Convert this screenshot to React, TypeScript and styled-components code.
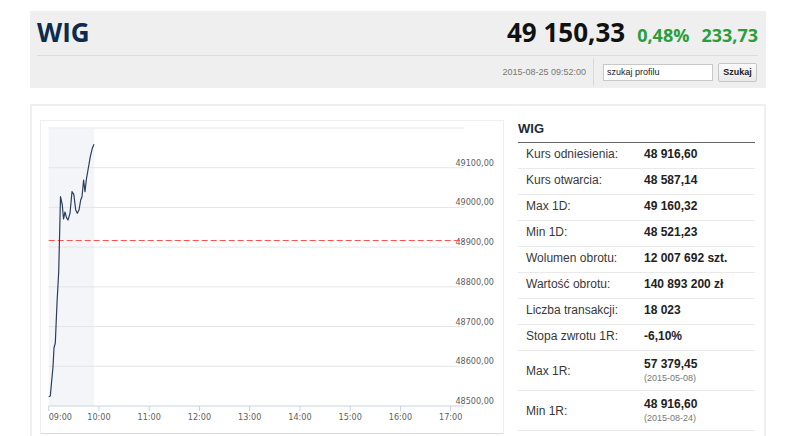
import React from "react";
import styled, { createGlobalStyle } from "styled-components";

const GlobalStyle = createGlobalStyle`
  *, *::before, *::after { box-sizing: border-box; }
  html, body { margin: 0; padding: 0; background: #ffffff; }
  body { font-family: "Liberation Sans", Arial, sans-serif; color: #333; }
`;

const Page = styled.div`
  width: 786px;
  padding: 11px 20px 0 30px;
`;

/* ---------- quote header ---------- */

const Header = styled.header`
  background: #efefef;
  height: 77px;
  padding: 0 8px 0 7px;
  display: flex;
  flex-direction: column;
`;

const TopRow = styled.div`
  height: 45px;
  padding-top: 6px;
  border-bottom: 1px solid #dcdcdc;
  display: flex;
  align-items: baseline;
  justify-content: space-between;
  font-family: "Open Sans", sans-serif;
  line-height: 30px;
`;

const Title = styled.h1`
  margin: 0;
  font-size: 26px;
  font-weight: 700;
  color: #0c2b4e;
  line-height: 30px;
`;

const Quote = styled.div`
  display: flex;
  align-items: baseline;
  gap: 12px;
`;

const Price = styled.span`
  font-size: 26px;
  font-weight: 700;
  color: #111;
`;

const Change = styled.span`
  font-size: 18px;
  font-weight: 700;
  color: #2a9d3c;
`;

const BottomRow = styled.div`
  flex: 1;
  display: flex;
  align-items: center;
  justify-content: flex-end;
  padding-right: 1px;
`;

const Stamp = styled.span`
  font-size: 9px;
  color: #777;
  margin-right: 7px;
`;

const Divider = styled.span`
  width: 1px;
  height: 28px;
  background: #dadada;
  margin-right: 9px;
`;

const SearchInput = styled.input`
  width: 110px;
  height: 17px;
  border: 1px solid #c8c8c8;
  background: #fff;
  padding: 0 3px;
  font-family: "Liberation Sans", Arial, sans-serif;
  font-size: 9px;
  color: #222;
  outline: none;
`;

const SearchButton = styled.button`
  margin-left: 5px;
  width: 39px;
  height: 19px;
  padding: 0;
  border: 1px solid #c6c6c6;
  border-radius: 2px;
  background: linear-gradient(#fbfbfb, #e9e9e9);
  font-family: "Liberation Sans", Arial, sans-serif;
  font-size: 9px;
  font-weight: 700;
  color: #222;
`;

/* ---------- body panel ---------- */

const Panel = styled.section`
  margin-top: 16px;
  border: 2px solid #efefef;
  border-bottom: none;
  padding: 14px 9px 0 8px;
  height: 332px;
  display: flex;
  align-items: flex-start;
  gap: 14px;
`;

const ChartBox = styled.div`
  width: 464px;
  height: 314px;
  border: 1px solid #efefef;
  border-bottom-color: #d9d9d9;
  flex-shrink: 0;
`;

const Stats = styled.div`
  width: 238px;
`;

const StatsTitle = styled.h2`
  margin: 0;
  height: 23px;
  font-size: 13px;
  font-weight: 700;
  line-height: 18px;
  color: #1d2b3a;
  border-bottom: 1px solid #666;
`;

const Row = styled.div<{ $tall?: boolean }>`
  display: grid;
  grid-template-columns: 126px 1fr;
  align-items: ${(p) => (p.$tall ? "center" : "start")};
  height: ${(p) => (p.$tall ? "40px" : "26px")};
  padding: ${(p) => (p.$tall ? "0" : "4px 0 0")};
  border-bottom: 1px solid #e9e9e9;
`;

const Label = styled.span`
  padding-left: 8px;
  font-size: 12px;
  line-height: 14px;
  color: #383838;
`;

const Value = styled.span`
  font-size: 12px;
  font-weight: 700;
  line-height: 14px;
  color: #222;
`;

const ValueStack = styled.div`
  display: flex;
  flex-direction: column;
`;

const DateNote = styled.span`
  font-size: 9px;
  line-height: 14px;
  color: #777;
`;

/* ---------- intraday chart ---------- */

const plotLeft = 48.7;
const plotRight = 464;
const plotTop = 128;
const plotBottom = 406;
const step = (plotBottom - plotTop) / 7;

const yLabels = ["49100,00", "49000,00", "48900,00", "48800,00", "48700,00", "48600,00", "48500,00"];
const hours = ["09:00", "10:00", "11:00", "12:00", "13:00", "14:00", "15:00", "16:00", "17:00"];
const hourStep = (450.7 - plotLeft) / 8;

const trace: [number, number][] = [
  [48.7, 396.7], [50.3, 396], [53, 366.7], [54, 348], [55.3, 343], [57, 303],
  [58.7, 272], [60.5, 196.7], [62.3, 205], [63.5, 219], [65, 212], [66.5, 217.7],
  [68, 220], [70, 213.3], [72, 191.7], [73.8, 194.3], [75.7, 210], [77.3, 213.3],
  [79, 210], [80.7, 200], [82, 196.7], [83.6, 180], [85, 191.7], [86.5, 178.3],
  [88, 170], [90.3, 156.7], [92.3, 148.3], [94, 144.3],
];

const labelFont = { fontFamily: "'DejaVu Sans', sans-serif", fontSize: 8.1, fill: "#606060" };

function IntradayChart() {
  const d = trace.map(([x, y], i) => `${i ? "L" : "M"}${x} ${y}`).join(" ");
  return (
    <svg width="462" height="312" viewBox="41 121 462 312">
      <rect x={plotLeft} y={plotTop + 1} width={94 - plotLeft} height={plotBottom - plotTop - 1} fill="#f3f5f8" />
      {[0, 1, 2, 3, 4, 5, 6].map((i) => (
        <line key={i} x1={plotLeft} x2={plotRight} y1={plotTop + i * step} y2={plotTop + i * step} stroke="#e6e6e6" strokeWidth="1" />
      ))}
      {yLabels.map((t, i) => (
        <text key={t} x={494} y={plotTop + (i + 1) * step - 2} textAnchor="end" {...labelFont}>
          {t}
        </text>
      ))}
      <line x1={plotLeft} x2={plotRight} y1={plotBottom} y2={plotBottom} stroke="#c7d3e0" strokeWidth="1" />
      {hours.map((h, i) => {
        const x = plotLeft + i * hourStep;
        return (
          <g key={h}>
            <line x1={x} x2={x} y1={plotBottom} y2={plotBottom + 5} stroke="#c7d3e0" strokeWidth="1" />
            <text x={x} y={420} textAnchor={i === 0 ? "start" : "middle"} {...labelFont}>
              {h}
            </text>
          </g>
        );
      })}
      <line x1={plotLeft} x2={plotRight} y1={240.5} y2={240.5} stroke="#ff5050" strokeWidth="1" strokeDasharray="6 3" />
      <path d={d} fill="none" stroke="#2d3d5c" strokeWidth="1.2" strokeLinejoin="round" />
    </svg>
  );
}

/* ---------- data ---------- */

type Stat = { label: string; value: string; date?: string };

const stats: Stat[] = [
  { label: "Kurs odniesienia:", value: "48 916,60" },
  { label: "Kurs otwarcia:", value: "48 587,14" },
  { label: "Max 1D:", value: "49 160,32" },
  { label: "Min 1D:", value: "48 521,23" },
  { label: "Wolumen obrotu:", value: "12 007 692 szt." },
  { label: "Wartość obrotu:", value: "140 893 200 zł" },
  { label: "Liczba transakcji:", value: "18 023" },
  { label: "Stopa zwrotu 1R:", value: "-6,10%" },
  { label: "Max 1R:", value: "57 379,45", date: "(2015-05-08)" },
  { label: "Min 1R:", value: "48 916,60", date: "(2015-08-24)" },
];

export default function App() {
  return (
    <>
      <GlobalStyle />
      <Page>
        <Header>
          <TopRow>
            <Title>WIG</Title>
            <Quote>
              <Price>49 150,33</Price>
              <Change>0,48%</Change>
              <Change>233,73</Change>
            </Quote>
          </TopRow>
          <BottomRow>
            <Stamp>2015-08-25 09:52:00</Stamp>
            <Divider />
            <SearchInput defaultValue="szukaj profilu" />
            <SearchButton>Szukaj</SearchButton>
          </BottomRow>
        </Header>
        <Panel>
          <ChartBox>
            <IntradayChart />
          </ChartBox>
          <Stats>
            <StatsTitle>WIG</StatsTitle>
            {stats.map((s) =>
              s.date ? (
                <Row key={s.label} $tall>
                  <Label>{s.label}</Label>
                  <ValueStack>
                    <Value>{s.value}</Value>
                    <DateNote>{s.date}</DateNote>
                  </ValueStack>
                </Row>
              ) : (
                <Row key={s.label}>
                  <Label>{s.label}</Label>
                  <Value>{s.value}</Value>
                </Row>
              )
            )}
          </Stats>
        </Panel>
      </Page>
    </>
  );
}
